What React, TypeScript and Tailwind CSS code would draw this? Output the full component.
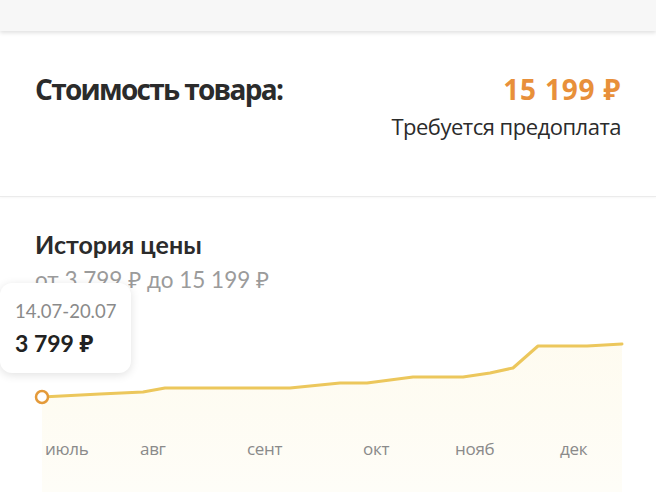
import React from "react";

const pts: [number, number][] = [
  [42, 397], [100, 394], [143, 392], [165, 388], [290, 388], [320, 385], [340, 383], [367, 383],
  [413, 377], [463, 377], [490, 373], [513, 368], [538, 346], [587, 346], [622, 344],
];

export default function App() {
  const top = 300;
  const line = pts.map(([x, y], i) => `${i ? "L" : "M"}${x} ${y - top}`).join(" ");
  const area = `${line} L622 ${492 - top} L42 ${492 - top} Z`;
  const months: [string, number][] = [
    ["июль", 45], ["авг", 140], ["сент", 247], ["окт", 363], ["нояб", 455], ["дек", 560],
  ];
  return (
    <div className="relative w-[656px] h-[492px] overflow-hidden bg-white">
      <div className="h-[31px] bg-[#f7f7f7] shadow-[0_2px_4px_rgba(0,0,0,0.12)]" />
      <div className="px-[35px] pt-[39px] h-[165px]" style={{ fontFamily: "'Open Sans', 'Noto Sans', sans-serif" }}>
        <div className="flex justify-between items-baseline">
          <div className="text-[28px] font-bold text-[#2b2b2b] tracking-[-1.7px] leading-[38px]">Стоимость товара:</div>
          <div className="text-[28px] font-bold text-[#e8903a] tracking-[0.8px] leading-[38px]">15 199 ₽</div>
        </div>
        <div className="text-right text-[22px] text-[#2b2b2b] tracking-[-0.5px] leading-[30px] mt-[3px]">Требуется предоплата</div>
      </div>
      <div className="h-px bg-[#ebebeb] shadow-[0_1px_2px_rgba(0,0,0,0.05)]" />
      <div className="px-[35px] pt-[32px]" style={{ fontFamily: "Lato, 'Noto Sans', sans-serif" }}>
        <div className="text-[25px] font-bold text-[#2b2b2b] leading-[30px]">История цены</div>
        <div className="text-[22.5px] text-[#9b9b9b] leading-[28px] mt-[7px]">от 3 799 ₽ до 15 199 ₽</div>
      </div>
      <svg className="absolute left-0 top-[300px]" width="656" height="192" viewBox="0 0 656 192">
        <defs>
          <linearGradient id="g" x1="0" y1="0" x2="0" y2="1">
            <stop offset="0" stopColor="#fdf6da" stopOpacity="0.4" />
            <stop offset="1" stopColor="#fdfbf0" stopOpacity="0.5" />
          </linearGradient>
        </defs>
        <path d={area} fill="url(#g)" />
        <path d={line} fill="none" stroke="#ecc75c" strokeWidth="3" strokeLinejoin="round" strokeLinecap="round" />
        <circle cx="42" cy="97" r="6" fill="#ffffff" stroke="#e49a3a" strokeWidth="2.5" />
        {months.map(([m, x]) => (
          <text key={m} x={x} y="155" fontSize="17" fill="#8a8a8a" fontFamily="'Open Sans', sans-serif" letterSpacing="-0.3">{m}</text>
        ))}
      </svg>
      <div
        className="absolute left-0 top-[283px] w-[131px] h-[90px] bg-white rounded-[12px] shadow-[0_2px_10px_rgba(0,0,0,0.12)] pl-[15px] pt-[16px]"
        style={{ fontFamily: "Lato, 'Noto Sans', sans-serif" }}
      >
        <div className="text-[18.5px] text-[#8a8a8a] leading-[24px]">14.07-20.07</div>
        <div className="text-[23px] font-bold text-[#222] leading-[28px] mt-[6px]">3 799 ₽</div>
      </div>
    </div>
  );
}
